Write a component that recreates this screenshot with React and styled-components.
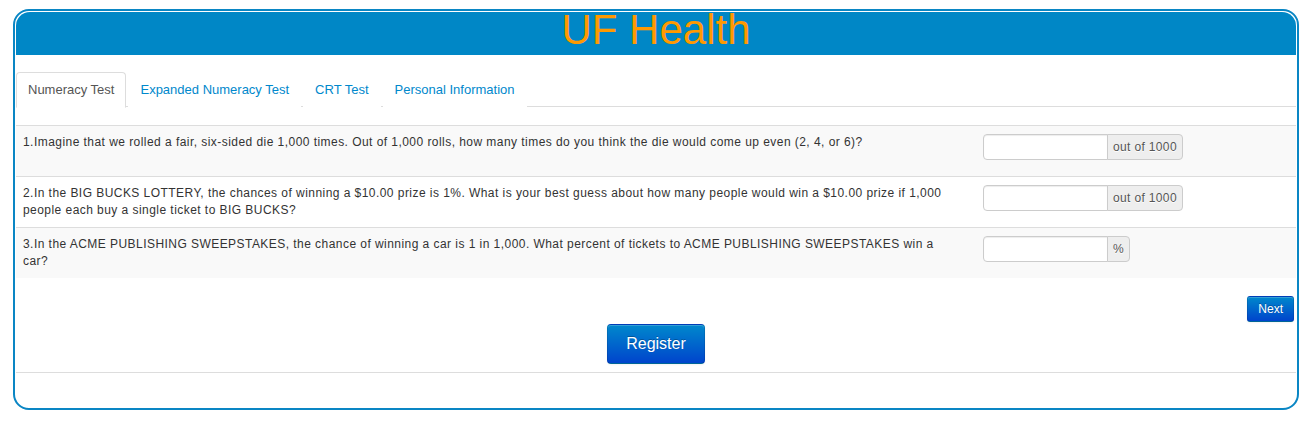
import React from 'react';
import styled, { createGlobalStyle } from 'styled-components';

const GlobalStyle = createGlobalStyle`
  body {
    margin: 0;
    background: #ffffff;
    font-family: "Liberation Sans", Arial, sans-serif;
    color: #333333;
  }
`;

const questions = [
  {
    n: 1,
    text: 'Imagine that we rolled a fair, six-sided die 1,000 times. Out of 1,000 rolls, how many times do you think the die would come up even (2, 4, or 6)?',
    unit: 'out of 1000',
  },
  {
    n: 2,
    text: 'In the BIG BUCKS LOTTERY, the chances of winning a $10.00 prize is 1%. What is your best guess about how many people would win a $10.00 prize if 1,000 people each buy a single ticket to BIG BUCKS?',
    unit: 'out of 1000',
  },
  {
    n: 3,
    text: 'In the ACME PUBLISHING SWEEPSTAKES, the chance of winning a car is 1 in 1,000. What percent of tickets to ACME PUBLISHING SWEEPSTAKES win a car?',
    unit: '%',
  },
];

const tabs = ['Numeracy Test', 'Expanded Numeracy Test', 'CRT Test', 'Personal Information'];

export default function App() {
  return (
    <>
      <GlobalStyle />
      <Page>
        <Card>
          <Header>
            <Title>UF Health</Title>
          </Header>

          <TabList>
            {tabs.map((t, i) => (
              <Tab key={t} active={i === 0}>{t}</Tab>
            ))}
          </TabList>

          <Table>
            {questions.map((q, i) => (
              <Row key={q.n} striped={i % 2 === 0}>
                <Question>{`${q.n}.${q.text}`}</Question>
                <AnswerCell>
                  <InputGroup>
                    <Input type="text" />
                    <Addon>{q.unit}</Addon>
                  </InputGroup>
                </AnswerCell>
              </Row>
            ))}
          </Table>

          <Pager>
            <Button>Next</Button>
          </Pager>

          <Actions>
            <Button large>Register</Button>
          </Actions>

          <Rule />
        </Card>
      </Page>
    </>
  );
}

const Page = styled.div`
  padding: 9px 0 0 13px;
`;

const Card = styled.div`
  width: 1286px;
  box-sizing: border-box;
  border: 2px solid #0a86c4;
  border-radius: 16px;
  padding: 1px 1px 35px;
  display: flex;
  flex-direction: column;
`;

const Header = styled.div`
  height: 43px;
  background: #0087c6;
  border-radius: 14px 14px 0 0;
  text-align: center;
`;

const Title = styled.h1`
  margin: 0;
  font-size: 42px;
  line-height: 36px;
  font-weight: normal;
  color: #ff9900;
`;

const TabList = styled.div`
  margin-top: 17px;
  height: 34px;
  display: flex;
  align-items: flex-start;
  gap: 2px;
  border-bottom: 1px solid #dddddd;
`;

const Tab = styled.a`
  display: block;
  padding: 8px 11px;
  font-size: 13px;
  line-height: 18px;
  border: 1px solid ${p => (p.active ? '#dddddd' : 'transparent')};
  border-bottom-color: ${p => (p.active ? '#ffffff' : 'transparent')};
  border-radius: 4px 4px 0 0;
  background: #ffffff;
  color: ${p => (p.active ? '#555555' : '#0088cc')};
  cursor: pointer;
`;

const Table = styled.div`
  margin-top: 18px;
`;

const Row = styled.div`
  display: grid;
  grid-template-columns: 959px 1fr;
  border-top: 1px solid #dddddd;
  background: ${p => (p.striped ? '#f9f9f9' : '#ffffff')};
`;

const Question = styled.div`
  padding: 8px 15px 8px 7px;
  font-size: 12px;
  line-height: 17px;
  letter-spacing: 0.45px;
  color: #333333;
  min-height: 34px;
`;

const AnswerCell = styled.div`
  padding: 8px;
`;

const InputGroup = styled.div`
  display: flex;
  margin-bottom: 8px;
`;

const Input = styled.input`
  width: 125px;
  height: 26px;
  box-sizing: border-box;
  border: 1px solid #cccccc;
  border-radius: 4px 0 0 4px;
  background: #ffffff;
  box-shadow: inset 0 1px 1px rgba(0, 0, 0, 0.075);
  padding: 4px 6px;
  margin: 0;
  outline: none;
`;

const Addon = styled.span`
  height: 26px;
  box-sizing: border-box;
  padding: 0 5px;
  margin-left: -1px;
  border: 1px solid #cccccc;
  border-radius: 0 4px 4px 0;
  background: #eeeeee;
  color: #555555;
  font-size: 12px;
  line-height: 24px;
  letter-spacing: 0.35px;
  text-shadow: 0 1px 0 #ffffff;
`;

const Pager = styled.div`
  margin-top: 18px;
  display: flex;
  justify-content: flex-end;
  padding-right: 2px;
`;

const Actions = styled.div`
  margin-top: 2px;
  display: flex;
  justify-content: center;
`;

const Button = styled.button`
  font-family: "Liberation Sans", Arial, sans-serif;
  font-size: ${p => (p.large ? '16px' : '12px')};
  line-height: 18px;
  padding: ${p => (p.large ? '10px 18px' : '3px 10px')};
  border-radius: ${p => (p.large ? '4px' : '3px')};
  color: #ffffff;
  text-shadow: 0 -1px 0 rgba(0, 0, 0, 0.25);
  background: linear-gradient(to bottom, #0088cc, #0044cc);
  border: 1px solid rgba(0, 0, 0, 0.1);
  border-bottom-color: rgba(0, 0, 0, 0.25);
  box-shadow: inset 0 1px 0 rgba(255, 255, 255, 0.2), 0 1px 2px rgba(0, 0, 0, 0.05);
  cursor: pointer;
`;

const Rule = styled.hr`
  margin: 8px 0 0;
  border: 0;
  border-top: 1px solid #dddddd;
`;
